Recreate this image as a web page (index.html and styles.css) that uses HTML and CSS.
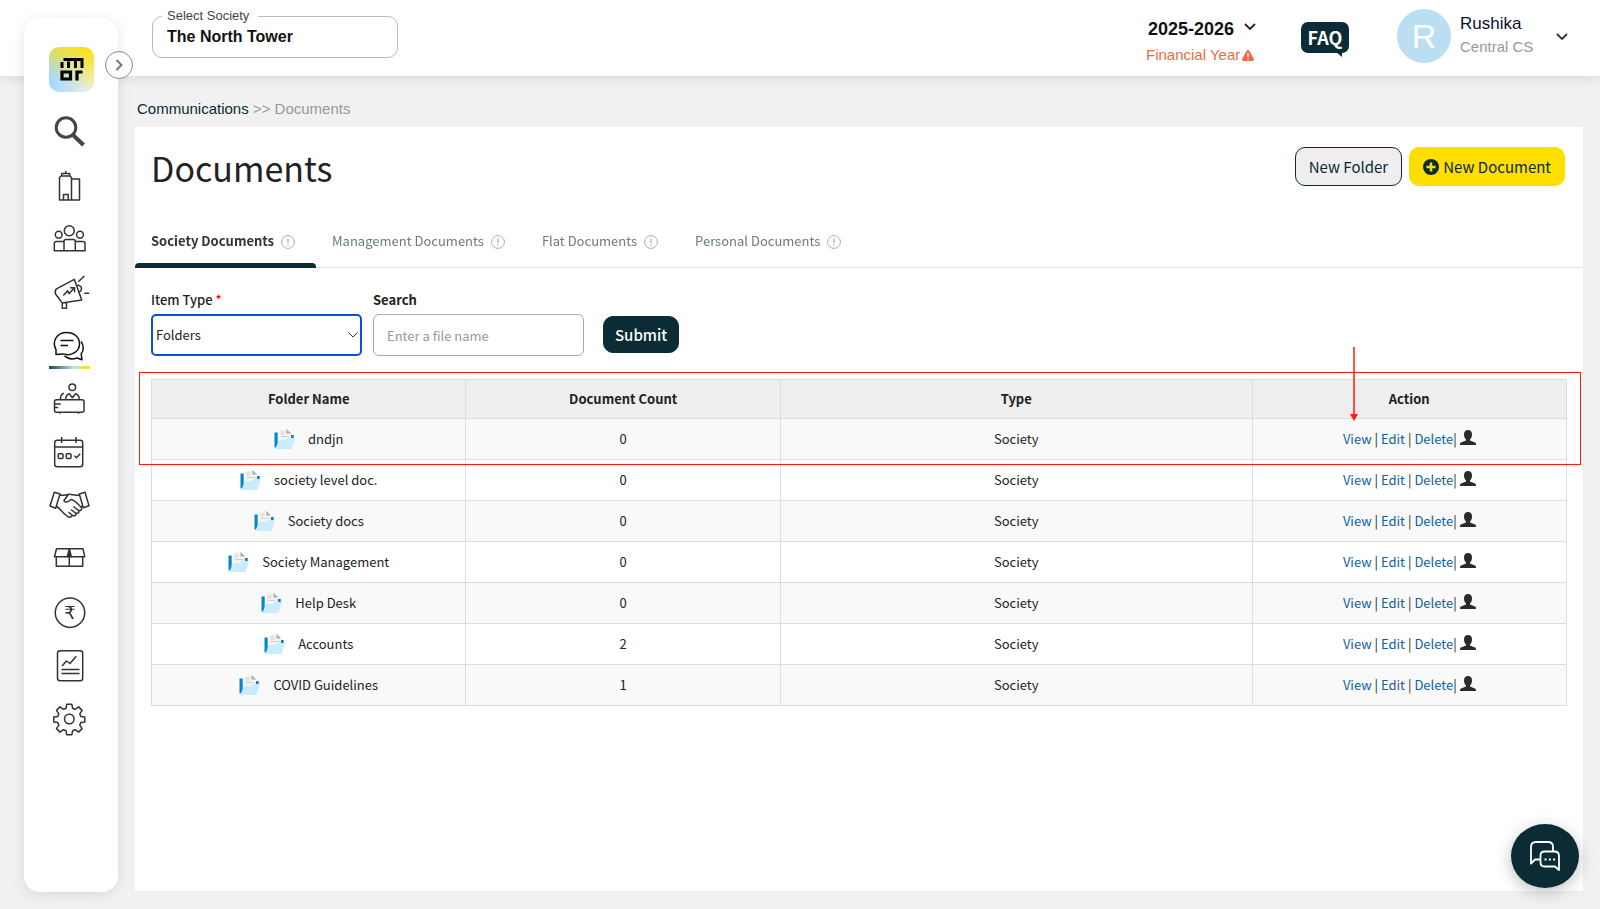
FILE: index.html
```html
<!DOCTYPE html>
<html lang="en">
<head>
    <meta charset="UTF-8">
    <meta name="viewport" content="width=device-width, initial-scale=1.0">
    <title>Documents</title>
    <link rel="stylesheet" href="styles.css">
</head>
<body>
    <!-- Shared icons -->
    <svg class="sprite" aria-hidden="true">
        <symbol id="icon-folder" viewBox="0 0 22 22">
            <path d="M.5 4.500h3.200v15H.5z" fill="#0a84cc"/>
            <path d="M17 7h2.700v4H17z" fill="#0a84cc"/>
            <path d="M5.500 2.500L8 1h5l4 4.500V12H5.500z" fill="#f3f3f3"/>
            <path d="M12.500 1l4.500 4.500h-4.500z" fill="#a9a9a9"/>
            <path d="M6.500 4h4M6.500 6h4M6.500 8.500h9" stroke="#d2d2d2" fill="none"/>
            <path d="M4.800 12h6.700l2.500-2h7l-3.500 11H.8c1.500-2 2.800-5 4-9z" fill="#c9ecff"/>
        </symbol>
        <symbol id="icon-user" viewBox="0 0 16 16">
            <path d="M8 0c2.600 0 4 1.800 4 4.400 0 2.200-.8 4-2 5v1.200l5 1.800c.8.3 1 1.100 1 2.600H0c0-1.500.2-2.300 1-2.600l5-1.800V9.400c-1.200-1-2-2.800-2-5C4 1.800 5.400 0 8 0z" fill="#2b2b2b"/>
        </symbol>
        <symbol id="icon-info" viewBox="0 0 14 14">
            <circle cx="7" cy="7" r="6.400" fill="none" stroke="currentColor"/>
            <path d="M7 3.500v4.500M7 9.300v1.400" fill="none" stroke="currentColor" stroke-width="1.200"/>
        </symbol>
        <symbol id="icon-chevron" viewBox="0 0 12 8">
            <path d="M1 1l5 5 5-5" fill="none" stroke="currentColor" stroke-width="1.800"/>
        </symbol>
    </svg>

    <header class="topbar">
        <fieldset class="society">
            <legend><label for="society">Select Society</label></legend>
            <input type="text" id="society" value="The North Tower" readonly>
        </fieldset>

        <div class="year">
            <div class="year-select">
                <select id="year">
                    <option>2025-2026</option>
                </select>
                <svg class="chevron"><use href="#icon-chevron"/></svg>
            </div>
            <label class="year-label" for="year">Financial Year
                <svg viewBox="0 0 12 11"><path d="M6 0c.7 0 1.100.4 1.500 1l4.200 7.500c.7 1.300.2 2.500-1.200 2.500h-9C.1 11-.4 9.800.3 8.500L4.500 1C4.900.4 5.300 0 6 0z" fill="#ee6c42"/><path d="M6 3v4M6 8.200v1.300" stroke="#fff" stroke-width="1.300"/></svg>
            </label>
        </div>

        <a href="#" class="faq">FAQ</a>

        <div class="avatar">R</div>
        <div class="profile">
            <div class="profile-name">Rushika</div>
            <div class="profile-role">Central CS</div>
        </div>
        <button type="button" class="profile-toggle" aria-label="Account menu">
            <svg><use href="#icon-chevron"/></svg>
        </button>
    </header>

    <aside class="sidebar">
        <a href="#" class="logo" aria-label="Home">
            <svg viewBox="0 0 45 45">
                <path d="M13 15v6M14.500 12.500h18.500V21M19.500 14.500V21M26.500 14V21" stroke="#000" stroke-width="3" fill="none"/>
                <path d="M13 25h8.500v7H13zM28 33.500V25h5.500" stroke="#000" stroke-width="3.200" fill="none"/>
            </svg>
        </a>
        <nav class="menu">
            <a href="#" aria-label="Search">
                <svg viewBox="0 0 48 40" class="bold"><circle cx="19" cy="15.500" r="9.800"/><path d="M26 23l10.500 10" stroke-width="4"/></svg>
            </a>
            <a href="#" aria-label="Society">
                <svg viewBox="0 0 48 40"><path d="M12.500 35V12.500l1.500-1.500h9l1.500 1.500V35zM24.500 14h8v21h-8M14.700 11V8.500h8V11M18.700 8.500V6M16.500 35v-5.500h4.700V35"/></svg>
            </a>
            <a href="#" aria-label="Members">
                <svg viewBox="0 0 48 40"><circle cx="22.300" cy="12.700" r="5"/><circle cx="11.700" cy="16.700" r="3.400"/><circle cx="33" cy="16.700" r="3.400"/><path d="M17 32.700V23.500q0-2 2-2h7.300q2 0 2 2v9.200zM17 32.700H7.300V25.500q0-2 2-2H17M28.300 32.700H38V25.500q0-2-2-2h-7.700"/></svg>
            </a>
            <a href="#" aria-label="Announcements">
                <svg viewBox="0 0 48 40"><path d="M27.300 8.300l7.400 20.700-18.200 2.700q-1.500.2-2.300-1.200L8.500 23q-1-3 1-5.200zM15.300 31.700v5.600h4.200v-6M29.500 15c4-2.500 7 3 3 6M31.300 10.700l6-5.700M37.300 22.300h5M16.300 24.500l4.400-4.800 1.300 3 5.300-6M23 16.700h4.500v4.500"/></svg>
            </a>
            <a href="#" class="active" aria-label="Communications">
                <svg viewBox="0 0 48 40" class="dark"><path d="M9 30.500v-4.800C4.500 17 10 8.500 19.500 8.500c8 0 13 5 13 11.200 0 7.500-7.500 13-16.500 10.200zM13.500 16.500h13M13.500 21.500H21M34 17.500c3 4 3 9 .2 12.300l.8 6-5-1.800c-5 1.800-9.500.8-12.500-2.200"/></svg>
            </a>
            <a href="#" aria-label="Help desk">
                <svg viewBox="0 0 48 40"><circle cx="25.300" cy="10.300" r="3.300"/><path d="M18.700 22.500c0-3 1-5 3.500-5.800l3.200 4 3.200-4c2.700.8 3.700 2.800 3.700 5.800M13.500 22c0-3.500.8-5.200 3.400-5.700M9.500 22.700H35q2 0 2 2v8.600q0 2-2 2H9.500q-2 0-2-2v-8.600q0-2 2-2zM7.700 27h6M7.700 30.500h3.500M13 35.500v1.200M31.500 35.500v1.200"/></svg>
            </a>
            <a href="#" aria-label="Calendar">
                <svg viewBox="0 0 48 40"><rect x="7.700" y="10.300" width="28" height="26.400" rx="2.500"/><path d="M7.700 17h28M14.700 7v6M29 7v6M27.500 25.700l2 2 3.700-4"/><rect x="11.300" y="23.700" width="4.700" height="4.700" rx="1"/><rect x="19.300" y="23.700" width="4.700" height="4.700" rx="1"/></svg>
            </a>
            <a href="#" aria-label="Vendors">
                <svg viewBox="0 0 48 40"><path d="M7.300 9.300L13 11 8.700 25.300 3 23zM38 9.300L32.300 11l4 13.700 5.700-2zM13 12c3 .5 5 .5 8-.5 2.500-.8 7 1.500 11.300.5M9.500 23.500c3 1 5.500 6 10.500 9.500 2 1.700 4 2 5-.5M21 12l-4 5.500c0 2 3.500 2.300 7-1 4 .5 7 5 10 7.500l2-1.500M21.500 29l4 3.500c2.500 1 4-.5 3-2.500M24 26.500l4.500 3.500c2.500 1 4-.5 3-2.500M26.500 23.500l5 4c2.500.5 4-1.500 2.500-3.500"/></svg>
            </a>
            <a href="#" aria-label="Assets">
                <svg viewBox="0 0 48 40"><path d="M9.500 12.700h26.500l1.700 8H7.500zM9.300 20.700v9.600h26.400v-9.600M22.300 12.700v17.600"/><path d="M22.300 12.700l-2 8 2-2 2 2z" fill="#333"/></svg>
            </a>
            <a href="#" aria-label="Accounting">
                <svg viewBox="0 0 48 40"><circle cx="23" cy="23.700" r="14.700"/><text x="23" y="29.500" class="rupee">₹</text></svg>
            </a>
            <a href="#" aria-label="Reports">
                <svg viewBox="0 0 48 40"><rect x="10.500" y="8.700" width="25.200" height="30" rx="2.500"/><path d="M15 24l4.500-5 3.500 2.500 6.300-7.200M14.500 27.500h18M14.500 31.500h18"/></svg>
            </a>
            <a href="#" aria-label="Settings">
                <svg viewBox="0 0 48 40"><circle cx="22.300" cy="24" r="4.800"/><path d="M19.700 9.300h5.200l.7 4 2.500 1 3.500-2.400 3.500 3.500-2.300 3.500 1 2.500 4 .6v5l-4 .6-1 2.500 2.300 3.500-3.500 3.500-3.500-2.400-2.500 1-.7 4h-5.200l-.7-4-2.500-1-3.500 2.400-3.500-3.500 2.300-3.500-1-2.500-4-.6v-5l4-.6 1-2.500-2.300-3.500 3.500-3.500 3.500 2.400 2.500-1z"/></svg>
            </a>
        </nav>
        <button type="button" class="expand" aria-label="Expand menu">
            <svg viewBox="0 0 8 12"><path d="M1.500 1l5 5-5 5" fill="none" stroke="#777" stroke-width="2"/></svg>
        </button>
    </aside>

    <main class="content">
        <nav class="breadcrumb"><a href="#">Communications</a> &gt;&gt; Documents</nav>

        <section class="card">
            <div class="card-header">
                <h1>Documents</h1>
                <div class="card-buttons">
                    <button type="button" class="btn btn-outline">New Folder</button>
                    <button type="button" class="btn btn-yellow">
                        <svg viewBox="0 0 16 16"><circle cx="8" cy="8" r="8" fill="#0b2c34"/><path d="M8 3.500v9M3.500 8h9" stroke="#ffde00" stroke-width="2.500"/></svg>
                        New Document
                    </button>
                </div>
            </div>

            <div class="tabs" role="tablist">
                <button type="button" class="tab active" role="tab" aria-selected="true">Society Documents <svg><use href="#icon-info"/></svg></button>
                <button type="button" class="tab" role="tab">Management Documents <svg><use href="#icon-info"/></svg></button>
                <button type="button" class="tab" role="tab">Flat Documents <svg><use href="#icon-info"/></svg></button>
                <button type="button" class="tab" role="tab">Personal Documents <svg><use href="#icon-info"/></svg></button>
            </div>

            <form class="filters">
                <div class="field">
                    <label for="itemType">Item Type <span class="required">*</span></label>
                    <div class="select-wrap">
                        <select id="itemType">
                            <option>Folders</option>
                            <option>Files</option>
                        </select>
                        <svg viewBox="0 0 10 6"><path d="M.5.5L5 5 9.500.5" fill="none" stroke="#333"/></svg>
                    </div>
                </div>
                <div class="field">
                    <label for="search" class="strong">Search</label>
                    <input type="text" id="search" placeholder="Enter a file name">
                </div>
                <button type="button" class="btn btn-submit">Submit</button>
            </form>

            <div class="table-wrap">
                <table class="folders">
                    <thead>
                        <tr>
                            <th>Folder Name</th>
                            <th>Document Count</th>
                            <th class="col-type">Type</th>
                            <th>Action</th>
                        </tr>
                    </thead>
                    <tbody>
                        <tr>
                            <td><div class="folder"><svg><use href="#icon-folder"/></svg>dndjn</div></td>
                            <td>0</td>
                            <td>Society</td>
                            <td class="actions"><a href="#">View</a> | <a href="#">Edit</a> | <a href="#">Delete</a>| <svg><use href="#icon-user"/></svg></td>
                        </tr>
                        <tr>
                            <td><div class="folder"><svg><use href="#icon-folder"/></svg>society level doc.</div></td>
                            <td>0</td>
                            <td>Society</td>
                            <td class="actions"><a href="#">View</a> | <a href="#">Edit</a> | <a href="#">Delete</a>| <svg><use href="#icon-user"/></svg></td>
                        </tr>
                        <tr>
                            <td><div class="folder"><svg><use href="#icon-folder"/></svg>Society docs</div></td>
                            <td>0</td>
                            <td>Society</td>
                            <td class="actions"><a href="#">View</a> | <a href="#">Edit</a> | <a href="#">Delete</a>| <svg><use href="#icon-user"/></svg></td>
                        </tr>
                        <tr>
                            <td><div class="folder"><svg><use href="#icon-folder"/></svg>Society Management</div></td>
                            <td>0</td>
                            <td>Society</td>
                            <td class="actions"><a href="#">View</a> | <a href="#">Edit</a> | <a href="#">Delete</a>| <svg><use href="#icon-user"/></svg></td>
                        </tr>
                        <tr>
                            <td><div class="folder"><svg><use href="#icon-folder"/></svg>Help Desk</div></td>
                            <td>0</td>
                            <td>Society</td>
                            <td class="actions"><a href="#">View</a> | <a href="#">Edit</a> | <a href="#">Delete</a>| <svg><use href="#icon-user"/></svg></td>
                        </tr>
                        <tr>
                            <td><div class="folder"><svg><use href="#icon-folder"/></svg>Accounts</div></td>
                            <td>2</td>
                            <td>Society</td>
                            <td class="actions"><a href="#">View</a> | <a href="#">Edit</a> | <a href="#">Delete</a>| <svg><use href="#icon-user"/></svg></td>
                        </tr>
                        <tr>
                            <td><div class="folder"><svg><use href="#icon-folder"/></svg>COVID Guidelines</div></td>
                            <td>1</td>
                            <td>Society</td>
                            <td class="actions"><a href="#">View</a> | <a href="#">Edit</a> | <a href="#">Delete</a>| <svg><use href="#icon-user"/></svg></td>
                        </tr>
                    </tbody>
                </table>

                <!-- Highlight box and arrow -->
                <div class="highlight"></div>
                <svg class="arrow" viewBox="0 0 8 74"><path d="M4 0v68" stroke="#ff1a0a" stroke-width="1.500"/><path d="M0 67h8l-4 7z" fill="#ff1a0a"/></svg>
            </div>
        </section>
    </main>

    <button type="button" class="chat" aria-label="Chat">
        <svg viewBox="0 0 30 30" fill="none" stroke="#fff" stroke-width="1.800" stroke-linejoin="round"><path d="M10 18.500H5L1 22.500V6q0-5 5-5h12q5 0 5 5v4M14.500 10.500h10q4.500 0 4.500 4.500v14l-4-3.500H14.500q-4 0-4-4V14.500q0-4 4-4z"/><path d="M14.500 18.500h2M18.800 18.500h2M23.100 18.500h2" stroke-width="2"/></svg>
    </button>
</body>
</html>
```
FILE: styles.css
```css
* {
    margin: 0;
    padding: 0;
    box-sizing: border-box;
}

body {
    font-family: 'Noto Sans CJK SC', 'Noto Sans', sans-serif;
    font-size: 14px;
    line-height: 20px;
    color: #222;
    background-color: #f1f1f1;
    min-height: 100vh;
    display: flex;
    flex-direction: column;
}

button,
input,
select {
    font: inherit;
    color: inherit;
}

button {
    cursor: pointer;
}

a {
    text-decoration: none;
}

.sprite {
    display: none;
}

/* Top bar */
.topbar {
    display: flex;
    align-items: flex-start;
    height: 76px;
    padding: 9px 32px 0 152px;
    background: white;
    box-shadow: 0 2px 12px rgba(0, 0, 0, 0.1);
    font-family: 'Liberation Sans', Arial, sans-serif;
}

.society {
    width: 246px;
    height: 49px;
    padding: 0 14px;
    border: 1px solid #bbb;
    border-radius: 10px;
    margin-right: auto;
}

.society legend {
    font-size: 13px;
    line-height: 14px;
    padding: 0 9px 0 5px;
    margin-left: -5px;
    color: #444;
}

.society input {
    display: block;
    width: 100%;
    height: 28px;
    border: none;
    outline: none;
    background: none;
    font-size: 16px;
    font-weight: bold;
    color: #111;
}

.year {
    padding-top: 8px;
    margin-right: 45px;
}

.year-select {
    position: relative;
    display: flex;
    padding-left: 2px;
}

.year-select select {
    appearance: none;
    border: none;
    background: none;
    width: 108px;
    height: 24px;
    font-size: 18px;
    font-weight: bold;
    color: #111;
}

.year-select .chevron {
    position: absolute;
    right: 0;
    top: 6px;
    width: 12px;
    height: 8px;
    pointer-events: none;
}

.year-label {
    display: flex;
    align-items: center;
    gap: 2px;
    margin-top: 4px;
    font-size: 15px;
    color: #ee6c42;
}

.year-label svg {
    width: 12px;
    height: 11px;
}

.faq {
    position: relative;
    width: 48px;
    height: 31px;
    margin: 13px 48px 0 0;
    background: #0b2c34;
    border-radius: 7px;
    color: white;
    font: bold 18px/31px 'Noto Sans CJK SC', sans-serif;
    text-align: center;
}

.faq::after {
    content: '';
    position: absolute;
    right: 7px;
    bottom: -4px;
    border-left: 6px solid transparent;
    border-top: 5px solid #0b2c34;
}

.avatar {
    width: 54px;
    height: 54px;
    margin-right: 9px;
    border-radius: 50%;
    background: #badff2;
    color: white;
    font-size: 34px;
    line-height: 54px;
    text-align: center;
}

.profile {
    width: 96px;
    padding-top: 3px;
}

.profile-name {
    font-size: 17px;
    line-height: 24px;
    color: #0d1028;
}

.profile-role {
    font-size: 15px;
    line-height: 22px;
    color: #999;
}

.profile-toggle {
    margin-top: 24px;
    border: none;
    background: none;
    color: #333;
}

.profile-toggle svg {
    display: block;
    width: 12px;
    height: 8px;
}

/* Sidebar */
.sidebar {
    position: fixed;
    top: 18px;
    bottom: 17px;
    left: 24px;
    width: 94px;
    padding-top: 29px;
    display: flex;
    flex-direction: column;
    align-items: center;
    background: white;
    border-radius: 16px;
    box-shadow: 0 2px 14px rgba(0, 0, 0, 0.1);
}

.logo {
    width: 45px;
    height: 45px;
    border-radius: 10px;
    background: linear-gradient(200deg, #fbe00d 5%, rgba(251, 224, 13, 0) 75%), linear-gradient(90deg, #9fd8ff, #f2f3dd);
}

.menu {
    display: flex;
    flex-direction: column;
    gap: 13px;
    margin-top: 20px;
}

.menu a {
    position: relative;
    width: 48px;
    height: 40px;
}

.menu svg {
    display: block;
    width: 48px;
    height: 40px;
    overflow: visible;
    fill: none;
    stroke: #333;
    stroke-width: 1.5px;
    stroke-linejoin: round;
}

.menu .bold {
    stroke: #444;
    stroke-width: 3px;
}

.menu .dark {
    stroke: #111;
}

.menu .rupee {
    font: 18px 'DejaVu Sans', sans-serif;
    fill: #333;
    stroke: none;
    text-anchor: middle;
}

.menu .active::after {
    content: '';
    position: absolute;
    left: 2px;
    top: 42px;
    width: 41px;
    height: 3px;
    background: linear-gradient(90deg, #1d4850, #badff2 60%, #fbe02d 90%);
}

.expand {
    position: absolute;
    top: 33px;
    right: -15px;
    width: 28px;
    height: 28px;
    display: flex;
    align-items: center;
    justify-content: center;
    border: 1px solid #888;
    border-radius: 50%;
    background: white;
}

.expand svg {
    width: 8px;
    height: 12px;
}

/* Content */
.content {
    flex: 1;
    display: flex;
    flex-direction: column;
    padding: 23px 17px 18px 135px;
}

.breadcrumb {
    padding-left: 2px;
    margin-bottom: 8px;
    font-family: 'Liberation Sans', Arial, sans-serif;
    font-size: 15px;
    color: #999;
}

.breadcrumb a {
    color: #0b2c34;
}

.card {
    flex: 1;
    background: white;
}

.card-header {
    display: flex;
    justify-content: space-between;
    padding: 20px 18px 0 16px;
}

.card-header h1 {
    font-size: 34px;
    font-weight: normal;
    line-height: 42px;
}

.card-buttons {
    display: flex;
    align-items: flex-start;
    gap: 7px;
}

.btn {
    display: flex;
    align-items: center;
    gap: 4px;
    height: 39px;
    padding: 0 13px;
    border: 1px solid #0b2c34;
    border-radius: 10px;
    font-size: 15px;
    color: #0b2c34;
}

.btn svg {
    width: 16px;
    height: 16px;
}

.btn-outline {
    background: #eee;
}

.btn-yellow {
    background: #ffde00;
    border-color: #ffde00;
}

/* Tabs */
.tabs {
    display: flex;
    margin-top: 26px;
    border-bottom: 1px solid #e3e3e3;
}

.tab {
    display: flex;
    align-items: center;
    gap: 7px;
    height: 52px;
    padding: 0 21px 0 16px;
    border: none;
    background: none;
    font-size: 13px;
    color: #6c7a83;
    position: relative;
}

.tab svg {
    width: 14px;
    height: 14px;
    margin-top: 2px;
    color: #aaa;
}

.tab.active {
    font-weight: bold;
    color: #333;
}

.tab.active::after {
    content: '';
    position: absolute;
    left: 0;
    right: 0;
    bottom: -1px;
    height: 5px;
    background: #0b2c34;
    border-radius: 4px 4px 0 0;
}

/* Filters */
.filters {
    display: flex;
    align-items: flex-end;
    gap: 11px;
    padding: 22px 16px 0;
}

.field {
    display: flex;
    flex-direction: column;
    gap: 4px;
    width: 211px;
    font-size: 13px;
}

.field label {
    font-weight: 500;
}

.field .strong {
    font-weight: bold;
}

.required {
    color: red;
}

.select-wrap {
    position: relative;
}

.select-wrap select {
    appearance: none;
    display: block;
    width: 100%;
    height: 42px;
    padding: 0 3px;
    border: 2px solid #0c4fd0;
    border-radius: 5px;
    background: white;
}

.select-wrap svg {
    position: absolute;
    right: 4px;
    top: 18px;
    width: 10px;
    height: 6px;
    pointer-events: none;
}

.field input {
    height: 42px;
    padding: 0 13px;
    border: 1px solid #aaa;
    border-radius: 6px;
}

.field input::placeholder {
    color: #999;
}

.btn-submit {
    margin: 0 0 3px 8px;
    height: 37px;
    padding: 0 11px;
    background: #0b2c34;
    color: white;
    font-weight: 500;
}

/* Table */
.table-wrap {
    position: relative;
    margin: 23px 16px 0;
}

.folders {
    width: 100%;
    table-layout: fixed;
    border-collapse: collapse;
    font-size: 13px;
    text-align: center;
}

.folders th,
.folders td {
    height: 41px;
    padding-bottom: 1px;
    border: 1px solid #ddd;
}

.folders th {
    height: 39px;
    background: #eee;
    font-weight: bold;
}

.col-type {
    width: 33.33%;
}

.folders tbody tr:nth-child(odd) {
    background: #f9f9f9;
}

.folder {
    display: flex;
    align-items: center;
    justify-content: center;
    gap: 12px;
}

.folder svg {
    width: 22px;
    height: 22px;
}

.actions a {
    color: #0e639c;
}

.actions svg {
    width: 16px;
    height: 16px;
    vertical-align: -2px;
}

.highlight {
    position: absolute;
    top: -7px;
    left: -12px;
    right: -14px;
    height: 93px;
    border: 1px solid #ff1a0a;
    pointer-events: none;
}

.arrow {
    position: absolute;
    top: -32px;
    right: 209px;
    width: 8px;
    height: 74px;
    pointer-events: none;
}

/* Chat button */
.chat {
    position: fixed;
    right: 21px;
    bottom: 21px;
    width: 68px;
    height: 64px;
    display: flex;
    align-items: center;
    justify-content: center;
    border: none;
    border-radius: 50%;
    background: #0b2c34;
    box-shadow: 0 4px 16px rgba(0, 0, 0, 0.25);
}

.chat svg {
    width: 30px;
    height: 30px;
}
```
